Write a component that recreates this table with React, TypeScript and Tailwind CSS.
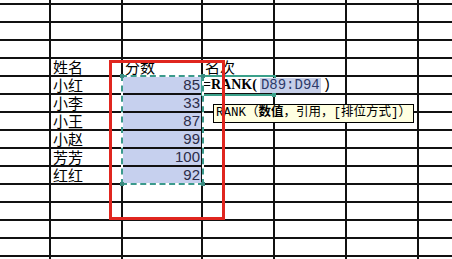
import React from 'react';

const cjk = "font-['Noto_Sans_CJK_SC',sans-serif]";
const mono = "font-['Liberation_Mono','Noto_Sans_CJK_SC',monospace]";

const names = ['姓名', '小红', '小李', '小王', '小赵', '芳芳', '红红'];
const scores = ['分数', '85', '33', '87', '99', '100', '92'];

const ROWS = 16;
const COLS = 7;

function Cell({ row, col }: { row: number; col: number }) {
  const dataRow = row - 4; // header sits in grid row 4
  const inTable = dataRow >= 0 && dataRow < names.length;
  const selected = col === 2 && dataRow >= 1 && dataRow <= 6;
  const isFormula = dataRow === 1 && col === 3;

  let content: React.ReactNode = null;
  if (inTable && col === 1) {
    content = <span className={`${cjk} text-[15px] leading-[16px] text-black pl-[2px]`}>{names[dataRow]}</span>;
  }
  if (inTable && col === 2) {
    content =
      dataRow === 0 ? (
        <span className={`${cjk} text-[15px] leading-[16px] text-black pl-[2px]`}>{scores[0]}</span>
      ) : (
        <span className="font-['Liberation_Sans',sans-serif] text-[15px] leading-[16px] text-[#2c2c48] ml-auto pr-px">
          {scores[dataRow]}
        </span>
      );
  }
  if (dataRow === 0 && col === 3) {
    content = <span className={`${cjk} text-[15px] leading-[16px] text-black pl-[2px]`}>名次</span>;
  }
  if (isFormula) {
    content = (
      <span className="text-[14px] leading-[16px] text-black whitespace-nowrap flex items-center">
        <b className="font-['Liberation_Serif',serif] font-bold">=RANK(</b>
        <span className={`${mono} bg-[#c6cfe9] text-[#2c3a6a] ml-[3px] px-px leading-[15px]`}>D89:D94</span>
        <span className={`${mono} ml-[2px]`}>)</span>
      </span>
    );
  }

  return (
    <div
      className={`flex items-end overflow-visible ${selected ? 'bg-[#c6d0ee]' : 'bg-white'} ${
        isFormula ? 'relative z-10' : ''
      }`}
    >
      {content}
    </div>
  );
}

export default function App() {
  const cells = [];
  for (let r = 0; r < ROWS; r++) {
    for (let c = 0; c < COLS; c++) {
      cells.push(<Cell key={`${r}-${c}`} row={r} col={c} />);
    }
  }

  return (
    <div className="relative w-[452px] h-[259px] overflow-hidden bg-white">
      <div className="grid grid-cols-[49px_70px_78px_70px_70px_70px_1fr] grid-rows-[3px_repeat(15,16px)] gap-[2px] bg-[#111]">
        {cells}
      </div>

      {/* formula cell frame, under the formula text */}
      <div className="absolute left-[201px] top-[75px] w-[75px] h-[21px] border-2 border-[#3ba08a] z-[5]">
        <div className="absolute -right-[2px] -bottom-[3px] w-[4px] h-[4px] bg-[#3ba08a]" />
      </div>

      {/* copy selection (marching ants) */}
      <div className="absolute left-[121px] top-[75px] w-[83px] h-[110px] border-2 border-white z-20">
        <div className="absolute -inset-[2px] border-2 border-dashed border-[#3b9a8c]" />
        <div className="absolute -left-[3px] -top-[3px] w-[4px] h-[4px] bg-[#3b8a80]" />
        <div className="absolute -right-[3px] -top-[3px] w-[4px] h-[4px] bg-[#3b8a80]" />
        <div className="absolute -left-[3px] -bottom-[3px] w-[4px] h-[4px] bg-[#3b8a80]" />
        <div className="absolute -right-[3px] -bottom-[3px] w-[4px] h-[4px] bg-[#3b8a80]" />
      </div>

      {/* function hint */}
      <div
        className={`absolute left-[213px] top-[104px] w-[201px] h-[19px] border border-black bg-[#ffffe1] z-30 flex items-center pl-[2px] ${mono} text-[12.5px] text-black whitespace-nowrap`}
      >
        RANK（<b className="font-bold">数值</b>，引用，[排位方式]）
      </div>

      {/* annotation */}
      <div className="absolute left-[109px] top-[60px] w-[116px] h-[160px] border-[3px] border-[#e0261f] z-40" />
    </div>
  );
}
